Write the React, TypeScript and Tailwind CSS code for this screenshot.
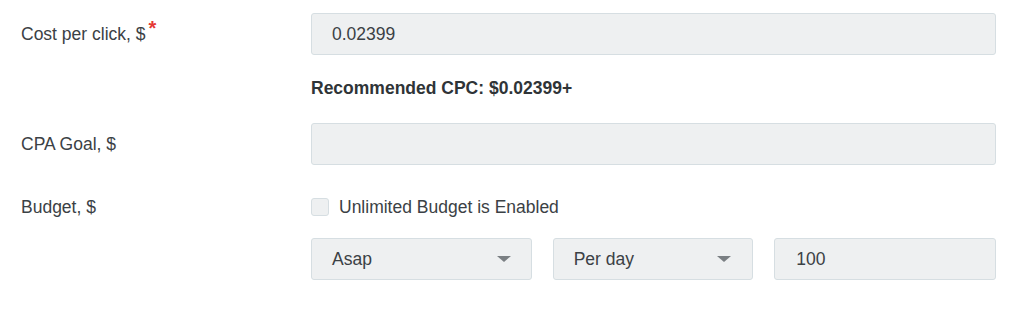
export default function App() {
  return (
    <div className="w-[1024px] h-[318px] bg-white font-['Liberation_Sans',Arial,sans-serif] text-[17.5px] text-[#3b4145]">
      <div className="grid grid-cols-[311px_685px] pt-[13px]">
        {/* Cost per click */}
        <div className="pl-[21px] h-[42px] flex items-center">
          <span>Cost per click, $</span>
          <span className="text-[#e53935] text-[20px] font-bold self-start mt-[5px] ml-[3px] leading-none">*</span>
        </div>
        <div>
          <div className="h-[42px] rounded-[3px] border border-[#d6dee2] bg-[#eef0f1] flex items-center px-[20px]">
            0.02399
          </div>
          <div className="mt-[24px] h-[18px] flex items-center font-bold text-[#2f3437]">
            Recommended CPC: $0.02399+
          </div>
        </div>

        {/* CPA Goal */}
        <div className="pl-[21px] h-[42px] flex items-center mt-[26px]">CPA Goal, $</div>
        <div className="mt-[26px]">
          <div className="h-[42px] rounded-[3px] border border-[#d6dee2] bg-[#eef0f1]" />
        </div>

        {/* Budget */}
        <div className="pl-[21px] mt-[32px] h-[20px] flex items-center">Budget, $</div>
        <div className="mt-[32px]">
          <label className="flex items-center h-[20px] gap-[10px]">
            <span className="w-[18px] h-[18px] rounded-[3px] border border-[#d6dee2] bg-[#eef0f1]" />
            <span>Unlimited Budget is Enabled</span>
          </label>
          <div className="flex gap-[21px] mt-[21px]">
            <div className="w-[221px] h-[42px] rounded-[3px] border border-[#d6dee2] bg-[#eef0f1] flex items-center justify-between pl-[20px] pr-[20px]">
              <span>Asap</span>
              <svg width="14" height="6" viewBox="0 0 14 6">
                <path d="M0 0h14L7 6z" fill="#7a7f83" />
              </svg>
            </div>
            <div className="w-[201px] h-[42px] rounded-[3px] border border-[#d6dee2] bg-[#eef0f1] flex items-center justify-between pl-[20px] pr-[21px]">
              <span>Per day</span>
              <svg width="14" height="6" viewBox="0 0 14 6">
                <path d="M0 0h14L7 6z" fill="#7a7f83" />
              </svg>
            </div>
            <div className="w-[222px] h-[42px] rounded-[3px] border border-[#d6dee2] bg-[#eef0f1] flex items-center px-[21px]">
              100
            </div>
          </div>
        </div>
      </div>
    </div>
  );
}
